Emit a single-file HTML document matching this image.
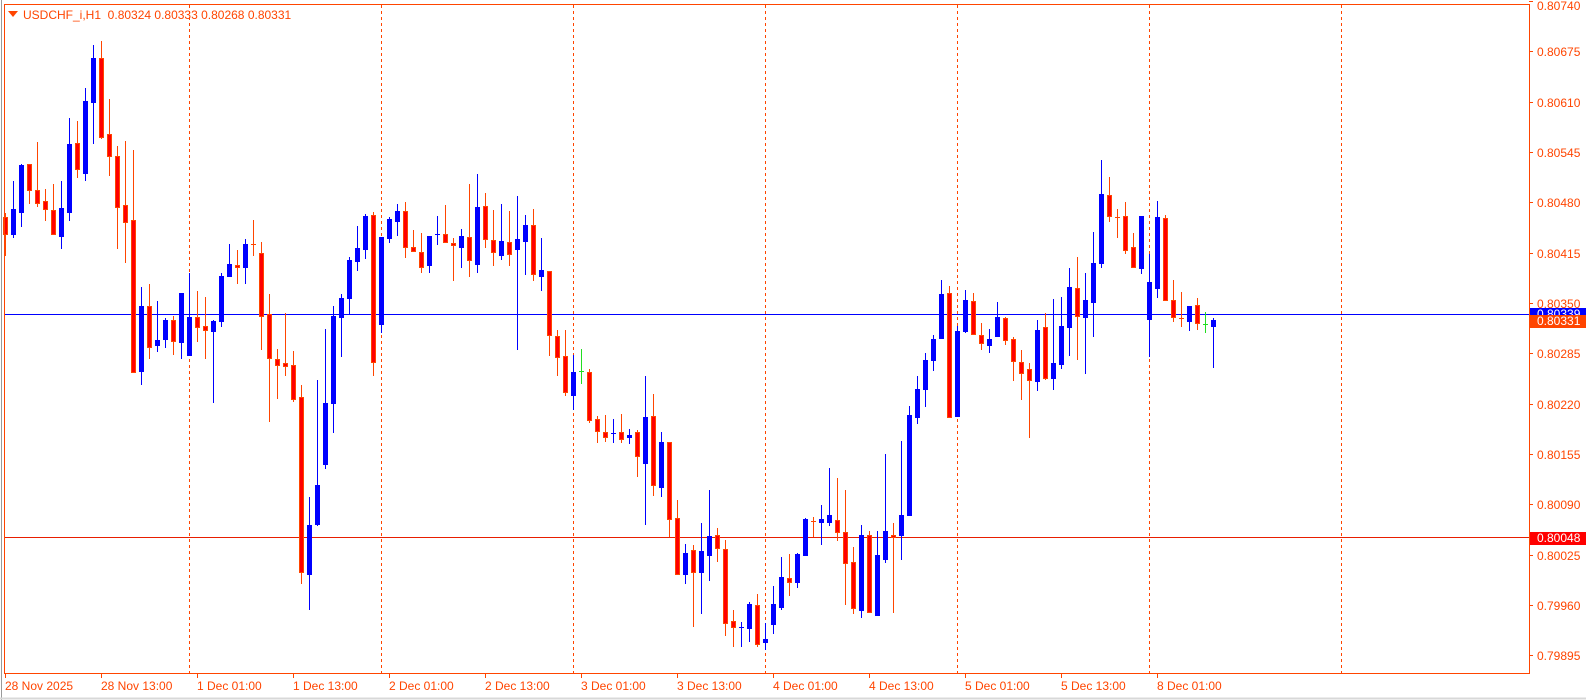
<!DOCTYPE html>
<html><head><meta charset="utf-8"><style>
html,body{margin:0;padding:0;background:#fff;overflow:hidden}
svg{display:block;font-family:"Liberation Sans",Arial,sans-serif;font-size:12px}
</style></head><body>
<svg width="1586" height="700" viewBox="0 0 1586 700" xmlns="http://www.w3.org/2000/svg">
<rect x="0" y="0" width="1586" height="700" fill="#fff"/>
<path d="M1.5 0V700" stroke="#9a9a9a" stroke-width="1"/>
<path d="M0 698.5H1586" stroke="#d8d8d8" stroke-width="2"/>
<g stroke="#ff4500" stroke-width="1" stroke-dasharray="3,3" shape-rendering="crispEdges">
<path d="M189.5 5V673M381.5 5V673M573.5 5V673M765.5 5V673M957.5 5V673M1149.5 5V673M1341.5 5V673"/>
</g>
<path d="M5 314.5H1529" stroke="#0000ff" stroke-width="1" shape-rendering="crispEdges"/>
<path d="M5 537.5H1529" stroke="#e81e00" stroke-width="1" shape-rendering="crispEdges"/>
<g fill="none" shape-rendering="crispEdges">
<path stroke="#0000ff" stroke-width="1" d="M13.5 181V238M21.5 164V227M61.5 181V249M69.5 118V221M85.5 88V181M93.5 45V144M141.5 287V385M157.5 301V352M165.5 318V348M181.5 293V359M189.5 273V355M213.5 320V403M221.5 273V327M229.5 244V277M245.5 239V284M309.5 497V610M317.5 380V526M325.5 329V469M333.5 306V433M341.5 294V357M349.5 257V314M357.5 226V271M365.5 214V259M381.5 237V333M389.5 217V243M397.5 204V236M429.5 236V273M437.5 216V245M461.5 229V268M477.5 174V273M501.5 204V260M517.5 196V350M525.5 215V275M541.5 238V291M573.5 355V410M613.5 419V443M629.5 429V444M645.5 376V525M661.5 432V497M685.5 544V584M701.5 523V614M709.5 490V581M741.5 622V647M749.5 602V642M765.5 623V650M773.5 586V634M781.5 557V610M797.5 553V588M805.5 518V555M821.5 505V545M829.5 468V526M861.5 525V618M877.5 531V615M885.5 454V563M901.5 441V560M909.5 406V516M917.5 376V424M925.5 353V407M933.5 335V371M941.5 280V338M957.5 326V416M965.5 290V333M989.5 329V353M997.5 302V337M1037.5 320V391M1053.5 299V390M1061.5 297V369M1069.5 268V356M1085.5 273V374M1093.5 232V337M1101.5 160V268M1141.5 216V274M1149.5 254V357M1157.5 201V298M1189.5 306V331M1213.5 318V368"/>
<path stroke="#0000ff" stroke-width="5" d="M13.5 209V235M21.5 165V213M61.5 208V237M69.5 144V213M85.5 101V174M93.5 58V103M141.5 306V372M157.5 340V346M165.5 320V340M181.5 293V343M189.5 317V356M213.5 321V332M221.5 276V322M229.5 264V277M245.5 244V268M309.5 525V575M317.5 485V525M325.5 403V465M333.5 316V404M341.5 298V318M349.5 260V299M357.5 248V262M365.5 216V250M381.5 237V325M389.5 219V239M397.5 211V222M429.5 236V266M437.5 234V235M461.5 236V248M477.5 207V265M501.5 241V256M517.5 239V250M525.5 225V242M541.5 270V277M573.5 372V396M613.5 433V434M629.5 435V438M645.5 417V464M661.5 442V488M685.5 553V575M701.5 551V573M709.5 536V556M741.5 627V628M749.5 604V629M765.5 639V643M773.5 604V625M781.5 577V608M797.5 554V583M805.5 519V556M821.5 519V523M829.5 515V523M861.5 535V611M877.5 555V616M885.5 531V560M901.5 515V536M909.5 415V516M917.5 389V418M925.5 360V390M933.5 339V361M941.5 294V339M957.5 331V417M965.5 300V332M989.5 339V346M997.5 317V337M1037.5 330V382M1053.5 363V379M1061.5 326V365M1069.5 287V328M1085.5 300V318M1093.5 263V303M1101.5 194V264M1141.5 216V269M1149.5 282V320M1157.5 217V289M1189.5 306V322M1213.5 320V327"/>
<path stroke="#ff4500" stroke-width="1" d="M5.5 213V256M29.5 164V204M37.5 142V207M45.5 189V221M53.5 184V234M77.5 121V178M101.5 41V139M109.5 99V176M117.5 146V249M125.5 141V263M133.5 150V372M149.5 284V359M173.5 316V355M197.5 291V342M205.5 297V359M237.5 250V284M253.5 220V256M261.5 242V350M269.5 294V422M277.5 349V399M285.5 313V376M293.5 351V402M301.5 385V584M373.5 212V376M405.5 202V258M413.5 230V251M421.5 233V273M445.5 205V243M453.5 238V281M469.5 184V277M485.5 193V248M493.5 210V266M509.5 211V266M533.5 209V281M549.5 271V356M557.5 330V376M565.5 330V396M589.5 369V423M597.5 416V443M605.5 415V442M621.5 414V443M637.5 430V477M653.5 394V496M669.5 442V537M677.5 500V575M693.5 545V627M717.5 528V562M725.5 540V636M733.5 610V647M757.5 594V647M789.5 554V596M813.5 517V537M837.5 478V541M845.5 490V605M853.5 547V614M869.5 531V612M893.5 523V613M949.5 286V417M973.5 293V334M981.5 323V350M1005.5 317V345M1013.5 337V381M1021.5 350V400M1029.5 363V438M1045.5 313V380M1077.5 257V360M1109.5 177V222M1117.5 209V238M1125.5 202V254M1133.5 233V267M1165.5 215V300M1173.5 280V322M1181.5 292V327M1197.5 298V330"/>
<path stroke="#ff4500" stroke-width="5" d="M5.5 217V235M29.5 164V191M37.5 190V204M45.5 201V210M53.5 210V235M77.5 143V170M101.5 58V138M109.5 134V157M117.5 156V208M125.5 205V223M133.5 220V373M149.5 306V348M173.5 320V342M197.5 317V328M205.5 326V331M237.5 265V268M253.5 244V245M261.5 253V317M269.5 314V359M277.5 359V366M285.5 363V367M293.5 365V400M301.5 397V573M373.5 215V363M405.5 211V248M413.5 247V252M421.5 252V268M445.5 234V243M453.5 243V246M469.5 237V261M485.5 206V240M493.5 240V253M509.5 242V255M533.5 225V275M549.5 271V336M557.5 336V358M565.5 356V393M589.5 372V421M597.5 419V432M605.5 432V438M621.5 432V440M637.5 432V457M653.5 416V486M669.5 442V520M677.5 518V575M693.5 550V573M717.5 535V549M725.5 549V624M733.5 621V628M757.5 605V645M789.5 578V583M813.5 521V522M837.5 520V533M845.5 532V564M853.5 562V609M869.5 535V613M893.5 535V538M949.5 293V418M973.5 301V335M981.5 335V344M1005.5 318V341M1013.5 339V362M1021.5 362V374M1029.5 369V381M1045.5 327V379M1077.5 288V317M1109.5 195V217M1117.5 217V218M1125.5 216V251M1133.5 247V268M1165.5 218V301M1173.5 300V318M1181.5 318V319M1197.5 305V324"/>
<path stroke="#ff0000" stroke-width="3" d="M5.5 218V234M29.5 165V190M37.5 191V203M45.5 202V209M53.5 211V234M77.5 144V169M101.5 59V137M109.5 135V156M117.5 157V207M125.5 206V222M133.5 221V372M149.5 307V347M173.5 321V341M197.5 318V327M205.5 327V330M237.5 266V267M261.5 254V316M269.5 315V358M277.5 360V365M285.5 364V366M293.5 366V399M301.5 398V572M373.5 216V362M405.5 212V247M413.5 248V251M421.5 253V267M445.5 235V242M453.5 244V245M469.5 238V260M485.5 207V239M493.5 241V252M509.5 243V254M533.5 226V274M549.5 272V335M557.5 337V357M565.5 357V392M589.5 373V420M597.5 420V431M605.5 433V437M621.5 433V439M637.5 433V456M653.5 417V485M669.5 443V519M677.5 519V574M693.5 551V572M717.5 536V548M725.5 550V623M733.5 622V627M757.5 606V644M789.5 579V582M837.5 521V532M845.5 533V563M853.5 563V608M869.5 536V612M893.5 536V537M949.5 294V417M973.5 302V334M981.5 336V343M1005.5 319V340M1013.5 340V361M1021.5 363V373M1029.5 370V380M1045.5 328V378M1077.5 289V316M1109.5 196V216M1125.5 217V250M1133.5 248V267M1165.5 219V300M1173.5 301V317M1197.5 306V323"/>
<path stroke="#22dd22" stroke-width="1" d="M581.5 349V384M579 371.5H584M1205.5 312V333M1203 324.5H1208"/>
</g>
<rect x="4.5" y="4.5" width="1525" height="669" fill="none" stroke="#ff4500" stroke-width="1" shape-rendering="crispEdges"/>
<g stroke="#ff4500" stroke-width="1" shape-rendering="crispEdges">
<path d="M1529 1.5h4M1529 51.5h4M1529 102.5h4M1529 152.5h4M1529 202.5h4M1529 253.5h4M1529 303.5h4M1529 353.5h4M1529 404.5h4M1529 454.5h4M1529 504.5h4M1529 555.5h4M1529 605.5h4M1529 655.5h4"/>
<path d="M5.5 674v4M101.5 674v4M197.5 674v4M293.5 674v4M389.5 674v4M485.5 674v4M581.5 674v4M677.5 674v4M773.5 674v4M869.5 674v4M965.5 674v4M1061.5 674v4M1157.5 674v4"/>
</g>
<g fill="#ff4500">
<text x="1537" y="10">0.80740</text>
<text x="1537" y="56">0.80675</text>
<text x="1537" y="107">0.80610</text>
<text x="1537" y="157">0.80545</text>
<text x="1537" y="207">0.80480</text>
<text x="1537" y="258">0.80415</text>
<text x="1537" y="308">0.80350</text>
<text x="1537" y="358">0.80285</text>
<text x="1537" y="409">0.80220</text>
<text x="1537" y="459">0.80155</text>
<text x="1537" y="509">0.80090</text>
<text x="1537" y="560">0.80025</text>
<text x="1537" y="610">0.79960</text>
<text x="1537" y="660">0.79895</text>
</g>
<rect x="1530" y="308" width="56" height="13" fill="#0000ff"/>
<text x="1537" y="318" fill="#fff">0.80339</text>
<rect x="1530" y="315" width="56" height="13" fill="#ff4500"/>
<text x="1537" y="325" fill="#fff">0.80331</text>
<rect x="1530" y="532" width="56" height="13" fill="#ff0000"/>
<text x="1537" y="542" fill="#fff">0.80048</text>
<g fill="#ff4500">
<text x="5" y="690">28 Nov 2025</text>
<text x="101" y="690">28 Nov 13:00</text>
<text x="197" y="690">1 Dec 01:00</text>
<text x="293" y="690">1 Dec 13:00</text>
<text x="389" y="690">2 Dec 01:00</text>
<text x="485" y="690">2 Dec 13:00</text>
<text x="581" y="690">3 Dec 01:00</text>
<text x="677" y="690">3 Dec 13:00</text>
<text x="773" y="690">4 Dec 01:00</text>
<text x="869" y="690">4 Dec 13:00</text>
<text x="965" y="690">5 Dec 01:00</text>
<text x="1061" y="690">5 Dec 13:00</text>
<text x="1157" y="690">8 Dec 01:00</text>
</g>
<path d="M8 11h10l-5 6z" fill="#ff4500"/>
<text x="23" y="19" fill="#ff4500">USDCHF_i,H1&#160;&#160;0.80324 0.80333 0.80268 0.80331</text>
</svg>
</body></html>
